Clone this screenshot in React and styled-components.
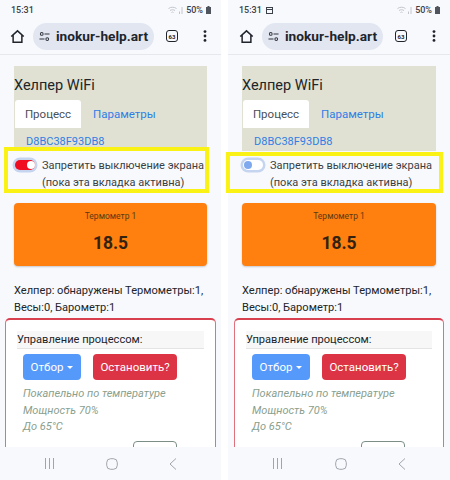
import React from "react";
import styled, { createGlobalStyle } from "styled-components";

const Global = createGlobalStyle`
  html, body { margin: 0; padding: 0; background: #fff; }
  body { width: 450px; height: 480px; overflow: hidden; font-family: Roboto, "Liberation Sans", sans-serif; }
  * { box-sizing: border-box; }
`;

const Stage = styled.div`
  display: flex;
  justify-content: space-between;
  width: 450px;
  height: 480px;
  overflow: hidden;
`;
const Phone = styled.div`
  width: ${(p) => p.$w}px;
  height: 480px;
  background: #f8f9fd;
  display: flex;
  flex-direction: column;
`;
const StatusBar = styled.div`
  height: 22px;
  flex: none;
  display: flex;
  align-items: center;
  justify-content: space-between;
  padding: 0 10px 2px 11px;
  font-size: 9px;
  font-weight: 500;
  color: #3c4048;
`;
const StatusGroup = styled.div`
  display: flex;
  align-items: center;
  gap: ${(p) => p.$gap || 3}px;
`;
const Toolbar = styled.div`
  height: 33px;
  flex: none;
  display: flex;
  align-items: center;
  padding: 0 0 4px ${(p) => p.$pl}px;
  border-bottom: 1px solid #e6e8ee;
`;
const Pill = styled.div`
  margin-left: 8px;
  width: 121px;
  height: 27px;
  border-radius: 14px;
  background: #e2e6f1;
  display: flex;
  align-items: center;
  padding-left: 6px;
  gap: 6px;
  font-size: 13.7px;
  font-weight: 700;
  color: #20242c;
  white-space: nowrap;
`;
const TabCount = styled.div`
  margin-left: 12px;
  width: 12px;
  height: 12px;
  border: 1.3px solid #20242c;
  border-radius: 3px;
  font-size: 6px;
  font-weight: 700;
  color: #20242c;
  display: flex;
  align-items: center;
  justify-content: center;
`;
const Dots = styled.div`
  margin-left: 25px;
  display: flex;
`;
const Content = styled.div`
  flex: 1;
  min-height: 0;
  padding: 11px 14px 0;
  color: #212529;
`;
const Header = styled.div`
  height: 85px;
  background: #e0e1d2;
  padding-top: 11px;
`;
const Title = styled.div`
  font-size: 14.5px;
  line-height: 18px;
  margin-bottom: 5px;
`;
const Tabs = styled.div`
  display: flex;
  height: 28px;
  font-size: 11.5px;
  padding-left: 1px;
`;
const Tab = styled.div`
  width: ${(p) => (p.$active ? "66px" : "auto")};
  background: ${(p) => (p.$active ? "#fff" : "transparent")};
  color: ${(p) => (p.$active ? "#495057" : "#2f7ee6")};
  margin-left: ${(p) => (p.$active ? "0" : "12px")};
  border-radius: 3px 3px 0 0;
  display: flex;
  align-items: center;
  justify-content: center;
`;
const DeviceId = styled.div`
  font-size: 11px;
  line-height: 14px;
  color: #2f7ee6;
  padding: 7px 0 0 12px;
`;
const Highlight = styled.div`
  position: relative;
  margin: ${(p) => p.$mt}px 0 0 ${(p) => p.$ml}px;
  width: ${(p) => p.$w}px;
  height: ${(p) => p.$h}px;
  border: 4px solid #f9f214;
  display: flex;
  align-items: flex-start;
  padding: ${(p) => p.$pt}px 0 0 ${(p) => p.$pl}px;
`;
const Toggle = styled.div`
  flex: none;
  width: 20px;
  height: 10px;
  margin-top: 3px;
  border-radius: 5px;
  background: ${(p) => (p.$on ? "#f00d1f" : "#fff")};
  box-shadow: 0 0 0 2.5px #c5d5f0;
  position: relative;
`;
const Knob = styled.div`
  position: absolute;
  top: 1px;
  left: ${(p) => (p.$on ? "11.5px" : "1px")};
  width: 8px;
  height: 8px;
  border-radius: 50%;
  background: ${(p) => (p.$on ? "#fff" : "#7fa9ef")};
`;
const ToggleLabel = styled.div`
  margin-left: 7px;
  font-size: 11px;
  line-height: 17px;
  color: #3a3f45;
  white-space: nowrap;
`;
const Sensor = styled.div`
  margin-top: 10px;
  height: 63px;
  background: #ff7f0f;
  border-radius: 4px;
  display: flex;
  flex-direction: column;
  align-items: center;
  box-shadow: 0 1px 2px rgba(0,0,0,.2);
`;
const SensorName = styled.div`
  font-size: 8.5px;
  line-height: 10px;
  margin-top: 8px;
  color: #5b3a12;
`;
const SensorValue = styled.div`
  font-size: 17.5px;
  font-weight: 700;
  line-height: 20px;
  margin-top: 12px;
  color: #33220f;
`;
const Info = styled.div`
  margin-top: 16px;
  font-size: 11.1px;
  line-height: 17px;
  color: #212529;
  white-space: nowrap;
`;
const Panel = styled.div`
  margin: 2px -${(p) => p.$out}px 0;
  height: 150px;
  border: 1px solid #e0707b;
  border-top: 2px solid #d9404f;
  border-radius: 5px;
  background: #fff;
  padding: 11px 11px 0;
`;
const PanelHead = styled.div`
  background: #f7f7f7;
  border-bottom: 1px solid #e4e4e4;
  height: 18px;
  font-size: 11.1px;
  line-height: 17px;
  color: #212529;
`;
const Actions = styled.div`
  display: flex;
  gap: 12px;
  margin: 5px 0 0 6px;
`;
const Btn = styled.div`
  height: 26px;
  width: ${(p) => p.$w}px;
  border-radius: 4px;
  background: ${(p) => p.$bg};
  color: #fff;
  font-size: 11.5px;
  display: flex;
  align-items: center;
  justify-content: center;
  gap: 4px;
`;
const Caret = styled.span`
  width: 0;
  height: 0;
  border-left: 3px solid transparent;
  border-right: 3px solid transparent;
  border-top: 3.5px solid #fff;
`;
const Notes = styled.div`
  margin: 6px 0 0 6px;
  font-size: 11px;
  font-style: italic;
  line-height: 16.5px;
  color: #8aa08e;
`;
const GhostRow = styled.div`
  display: flex;
  justify-content: flex-end;
  margin: 5px 27px 0 0;
`;
const Ghost = styled.div`
  width: 44px;
  height: 20px;
  border: 1px solid #7b8f86;
  border-radius: 4px;
`;
const NavBar = styled.div`
  position: relative;
  flex: none;
  height: 33px;
  background: #f8f9fd;
  display: flex;
  align-items: center;
  justify-content: space-between;
  padding: 0 44px 0 44px;
`;

const Home = () => (
  <svg width="15" height="15" viewBox="0 0 24 24" fill="none" stroke="#20242c" strokeWidth="2.4">
    <path d="M2 12 12 3l10 9M5 10v11h14V10" />
  </svg>
);
const Tune = () => (
  <svg width="11" height="11" viewBox="0 0 12 12" fill="none" stroke="#30343c" strokeWidth="1.1">
    <circle cx="3" cy="3.2" r="1.5" />
    <path d="M6 3.2h5.5M.5 8.800H6" />
    <circle cx="9" cy="8.800" r="1.5" />
  </svg>
);
const Kebab = () => (
  <svg width="4" height="12" viewBox="0 0 4 12" fill="#20242c">
    <circle cx="2" cy="1.6" r="1.4" />
    <circle cx="2" cy="6" r="1.4" />
    <circle cx="2" cy="10.4" r="1.4" />
  </svg>
);
const Signal = () => (
  <svg width="15" height="8" viewBox="0 0 15 8" fill="none" stroke="#c2c6cc" strokeWidth="1">
    <path d="M.5 2.500C3 .8 6 .8 8.500 2.500M2 4.500c1.500-1 3.500-1 5 0M3.500 6.500c.8-.6 1.200-.6 2 0M11.500 8V5.500M14 8V1" />
  </svg>
);
const Battery = () => (
  <svg width="5" height="8" viewBox="0 0 5 8" fill="#50545c">
    <path d="M1.500 0h2v1H5v7H0V1h1.500z" />
  </svg>
);
const Calendar = () => (
  <svg width="7" height="7" viewBox="0 0 7 7" fill="none" stroke="#3c4048" strokeWidth="1">
    <rect x=".5" y=".5" width="6" height="6" />
    <path d="M.5 2.500h6" />
  </svg>
);
const NavIcons = () => (
  <NavBar>
    <svg width="11" height="11" viewBox="0 0 11 11" stroke="#a0a4ac" strokeWidth="1" fill="none"><path d="M1.500 0v11M5.500 0v11M9.500 0v11" /></svg>
    <svg width="12" height="12" viewBox="0 0 12 12" stroke="#a0a4ac" strokeWidth="1" fill="none"><rect x=".7" y=".7" width="10.600" height="10.600" rx="4" /></svg>
    <svg width="8" height="12" viewBox="0 0 8 12" stroke="#a0a4ac" strokeWidth="1" fill="none"><path d="M7 .5 1 6l6 5.500" /></svg>
  </NavBar>
);

const PhoneView = ({ on, calendar, w, pl, box, out }) => (
  <Phone $w={w}>
    <StatusBar>
      <StatusGroup $gap={4}>15:31{calendar && <Calendar />}</StatusGroup>
      <StatusGroup><Signal />50%<Battery /></StatusGroup>
    </StatusBar>
    <Toolbar $pl={pl}>
      <Home />
      <Pill><Tune />inokur-help.art</Pill>
      <TabCount>63</TabCount>
      <Dots><Kebab /></Dots>
    </Toolbar>
    <Content>
      <Header>
        <Title>Хелпер WiFi</Title>
        <Tabs>
          <Tab $active>Процесс</Tab>
          <Tab>Параметры</Tab>
        </Tabs>
        <DeviceId>D8BC38F93DB8</DeviceId>
      </Header>
      <Highlight {...box}>
        <Toggle $on={on}><Knob $on={on} /></Toggle>
        <ToggleLabel>Запретить выключение экрана<br />(пока эта вкладка активна)</ToggleLabel>
      </Highlight>
      <Sensor>
        <SensorName>Термометр 1</SensorName>
        <SensorValue>18.5</SensorValue>
      </Sensor>
      <Info>Хелпер: обнаружены Термометры:1,<br />Весы:0, Барометр:1</Info>
      <Panel $out={out}>
        <PanelHead>Управление процессом:</PanelHead>
        <Actions>
          <Btn $w={58} $bg="#5599fb">Отбор<Caret /></Btn>
          <Btn $w={84} $bg="#dc3445">Остановить?</Btn>
        </Actions>
        <Notes>Покапельно по температуре<br />Мощность 70%<br />До 65°С</Notes>
        <GhostRow><Ghost /></GhostRow>
      </Panel>
    </Content>
    <NavIcons />
  </Phone>
);

export default function App() {
  return (
    <>
      <Global />
      <Stage>
        <PhoneView on w={221} pl={10} out={9}
          box={{ $mt: -4, $ml: -10, $w: 205, $h: 46, $pt: 6, $pl: 7 }} />
        <PhoneView calendar w={222} pl={11} out={8}
          box={{ $mt: 1, $ml: -16, $w: 217, $h: 41, $pt: 1, $pl: 13 }} />
      </Stage>
    </>
  );
}
